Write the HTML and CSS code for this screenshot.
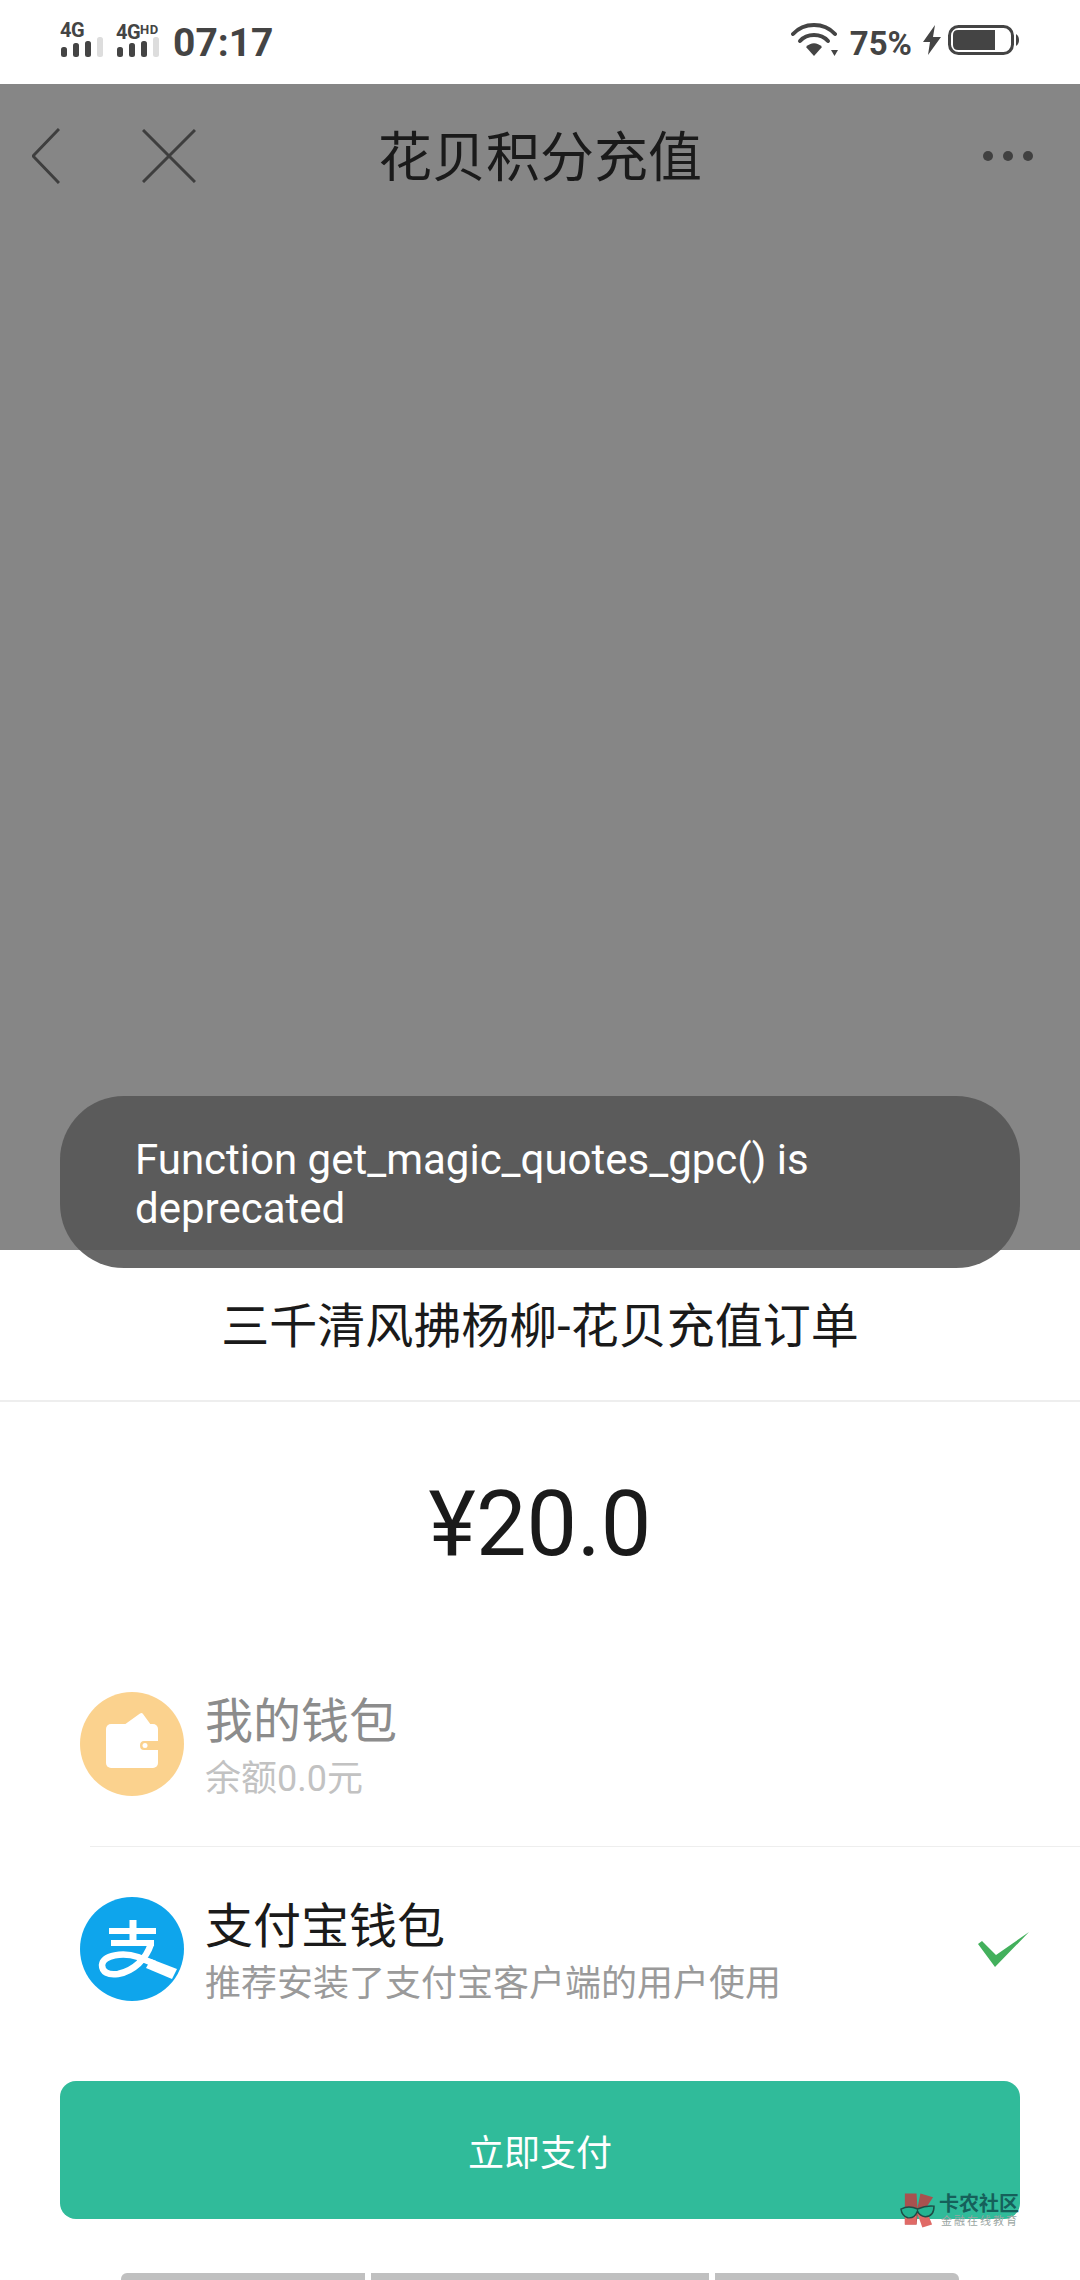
FILE: index.html
```html
<!DOCTYPE html>
<html lang="zh-CN">
<head>
    <meta charset="UTF-8">
    <meta name="viewport" content="width=device-width, initial-scale=1.0">
    <title>花贝积分充值</title>
    <link rel="stylesheet" href="styles.css">
</head>
<body>
    <div class="status-bar">
        <div class="sim">
            <div class="sim-label">4G</div>
            <svg class="sim-bars" width="42" height="20" viewBox="0 0 42 20">
                <rect x="0" y="10" width="6" height="10" rx="2.5" fill="#444"/>
                <rect x="12" y="6" width="6" height="14" rx="2.5" fill="#444"/>
                <rect x="24" y="4" width="6" height="16" rx="2.5" fill="#444"/>
                <rect x="36" y="0" width="6" height="20" rx="2.5" fill="#ddd"/>
            </svg>
        </div>
        <div class="sim">
            <div class="sim-label">4G<span class="sim-hd">HD</span></div>
            <svg class="sim-bars" width="42" height="20" viewBox="0 0 42 20">
                <rect x="0" y="10" width="6" height="10" rx="2.5" fill="#444"/>
                <rect x="12" y="6" width="6" height="14" rx="2.5" fill="#444"/>
                <rect x="24" y="4" width="6" height="16" rx="2.5" fill="#444"/>
                <rect x="36" y="0" width="6" height="20" rx="2.5" fill="#ddd"/>
            </svg>
        </div>
        <span class="clock">07:17</span>
        <div class="status-right">
            <svg class="wifi" width="48" height="34" viewBox="0 0 48 34">
                <path d="M2 11 C13 -1 33 -1 44 11" fill="none" stroke="#444" stroke-width="4" stroke-linecap="round"/>
                <path d="M9 18 C16 10 30 10 37 18" fill="none" stroke="#444" stroke-width="4" stroke-linecap="round"/>
                <path d="M15 24 C20 19 26 19 31 24 L23 33 Z" fill="#444"/>
                <path d="M40 27 H47 L43.5 33 Z" fill="#444"/>
            </svg>
            <span class="battery-level">75%</span>
            <svg class="bolt" width="18" height="30" viewBox="0 0 18 30">
                <path d="M12 0 L0 17 H7 L5 30 L18 12 H10 Z" fill="#444"/>
            </svg>
            <svg width="72" height="30" viewBox="0 0 72 30">
                <rect x="1.5" y="1.5" width="63" height="27" rx="9" fill="none" stroke="#444" stroke-width="3"/>
                <path d="M10 5 H47 V25 H10 Q5 25 5 20 V10 Q5 5 10 5 Z" fill="#444"/>
                <path d="M68 9 Q71 11 71 15 Q71 19 68 21 Z" fill="#444"/>
            </svg>
        </div>
    </div>

    <div class="webview">
        <div class="nav">
            <svg class="nav-back" width="28" height="56" viewBox="0 0 28 56">
                <path d="M27 1 L1 28 L27 55" fill="none" stroke="#3e3e3e" stroke-width="3"/>
            </svg>
            <svg class="nav-close" width="54" height="54" viewBox="0 0 54 54">
                <path d="M1 1 L53 53 M53 1 L1 53" fill="none" stroke="#3e3e3e" stroke-width="3"/>
            </svg>
            <h1 class="nav-title">花贝积分充值</h1>
            <div class="nav-more"><i></i><i></i><i></i></div>
        </div>
    </div>

    <div class="sheet">
        <div class="order-name">三千清风拂杨柳-花贝充值订单</div>
        <div class="amount">¥20.0</div>

        <div class="pay-row">
            <svg class="pay-icon" width="104" height="104" viewBox="0 0 104 104">
                <circle cx="52" cy="52" r="52" fill="#fbd28e"/>
                <path d="M44 33 L60 21.500 Q62 20.500 63 22 L71 33 Z" fill="#fff"/>
                <rect x="26" y="32" width="52" height="44" rx="5" fill="#fff"/>
                <path d="M78 49 H64 Q60 49 60 53.500 Q60 58 64 58 H78 Z" fill="#fbd28e"/>
                <circle cx="65" cy="53.500" r="2.500" fill="#fff"/>
            </svg>
            <div class="pay-text">
                <div class="pay-name is-disabled">我的钱包</div>
                <div class="pay-desc is-disabled">余额0.0元</div>
            </div>
        </div>
        <div class="pay-divider"></div>
        <div class="pay-row">
            <svg class="pay-icon" width="104" height="104" viewBox="0 0 104 104">
                <circle cx="52" cy="52" r="52" fill="#0ea5ec"/>
                <path d="M29 34 H76 M31 46 H74" fill="none" stroke="#fff" stroke-width="6"/>
                <path d="M53 23 V46" fill="none" stroke="#fff" stroke-width="7"/>
                <path d="M71 47 C66 62 54 74 38 77 C28 78.500 22 75 22 68 C23 58 43 55 58 60 L75 67" fill="none" stroke="#fff" stroke-width="6.500"/>
                <path d="M71 62 L97 72 L92 82 L66 71 Z" fill="#fff"/>
            </svg>
            <div class="pay-text">
                <div class="pay-name">支付宝钱包</div>
                <div class="pay-desc">推荐安装了支付宝客户端的用户使用</div>
            </div>
            <svg class="pay-check" width="51" height="35" viewBox="0 0 51 35">
                <path d="M0 12 L4 9 L18 23 L51 0 L17 35 Z" fill="#43b05c"/>
            </svg>
        </div>

        <button class="pay-btn">立即支付</button>

        <div class="home-bars"><i class="bar-a"></i><i class="bar-b"></i><i class="bar-c"></i></div>
    </div>

    <div class="toast">Function get_magic_quotes_gpc() is deprecated</div>

    <div class="watermark">
        <svg width="35" height="36" viewBox="0 0 36 36">
            <path d="M5 1 H17 L18 16 L21 1 L34 5 L26 17 L18 24 L17 33 H5 Z" fill="#a8514f"/>
            <path d="M18 22 L23 36 L33 33 L27 18 Z" fill="#e06a66"/>
            <path d="M5 24 H17 V33 H5 Z" fill="#e06a66"/>
            <path d="M1 17 Q9 13 18 17 Q27 13 35 14 Q35 25 26 25 Q20 24 18 19 Q15 27 8 26 Q2 24 1 17 Z" fill="#24b491" stroke="#1e4d46" stroke-width="1.500"/>
        </svg>
        <div class="watermark-text">
            <div class="watermark-name">卡农社区</div>
            <div class="watermark-sub">金融在线教育</div>
        </div>
    </div>
</body>
</html>
```

FILE: styles.css
```css
* {
    box-sizing: border-box;
}
html, body {
    margin: 0;
    padding: 0;
}
body {
    position: relative;
    width: 1080px;
    height: 2280px;
    overflow: hidden;
    background: #fff;
    font-family: Roboto, "Noto Sans CJK SC", sans-serif;
}

/* status bar */
.status-bar {
    height: 84px;
    padding: 23px 60px 0;
    display: flex;
    align-items: flex-start;
    background: #fff;
    color: #444;
}
.sim {
    width: 42px;
    margin-right: 13px;
    margin-left: 1px;
}
.sim-label {
    height: 14px;
    margin-left: -1px;
    font-size: 20px;
    line-height: 14px;
    font-weight: 700;
    letter-spacing: -0.5px;
    white-space: nowrap;
}
.sim-hd {
    font-size: 13px;
    letter-spacing: 0.5px;
    vertical-align: 5px;
}
.sim-bars {
    display: block;
}
.clock {
    margin-left: 1px;
    font-size: 39px;
    line-height: 40px;
    font-weight: 700;
}
.status-right {
    margin-left: auto;
    display: flex;
    align-items: center;
    height: 34px;
}
.wifi {
    margin-right: -1px;
}
.battery-level {
    margin-left: 12px;
    font-size: 33px;
    font-weight: 700;
    line-height: 40px;
    margin-top: 7px;
}
.bolt {
    margin-left: 11px;
    margin-right: 7px;
}

/* web view behind the dim */
.webview {
    height: 1166px;
    background: #868686;
}
.nav {
    position: relative;
    height: 144px;
    display: flex;
    align-items: center;
    padding-left: 32px;
}
.nav-close {
    margin-left: 82px;
}
.nav-title {
    position: absolute;
    top: 3px;
    left: 0;
    right: 0;
    margin: 0;
    text-align: center;
    font-size: 54px;
    line-height: 144px;
    font-weight: 400;
    color: #1a1a1a;
}
.nav-more {
    position: absolute;
    right: 47px;
    display: flex;
    gap: 10px;
}
.nav-more i {
    width: 10px;
    height: 10px;
    border-radius: 50%;
    background: #404040;
}

/* payment sheet */
.sheet {
    background: #fff;
}
.order-name {
    height: 152px;
    border-bottom: 2px solid #eee;
    text-align: center;
    font-size: 48px;
    line-height: 154px;
    color: #1a1a1a;
}
.amount {
    height: 240px;
    text-align: center;
    font-size: 90px;
    line-height: 246px;
    color: #1a1a1a;
}
.pay-row {
    height: 204px;
    padding-left: 80px;
    display: flex;
    align-items: center;
}
.pay-icon {
    flex: none;
}
.pay-text {
    margin-left: 21px;
    margin-top: 6px;
}
.pay-name {
    font-size: 48px;
    line-height: 58px;
    color: #1a1a1a;
}
.pay-name.is-disabled {
    color: #8c8c8c;
}
.pay-desc {
    margin-top: 6px;
    font-size: 36px;
    line-height: 44px;
    color: #9a9a9a;
}
.pay-desc.is-disabled {
    color: #c2c2c2;
}
.pay-check {
    margin-left: auto;
    margin-right: 51px;
}
.pay-divider {
    height: 1px;
    margin-left: 90px;
    background: #eee;
}
.pay-btn {
    display: block;
    width: 960px;
    height: 138px;
    margin: 30px 60px 0;
    border: none;
    border-radius: 16px;
    background: #30bb9a;
    color: #fff;
    font-family: inherit;
    font-size: 36px;
}
.home-bars {
    margin: 54px 0 0 121px;
    display: flex;
    gap: 6px;
}
.home-bars i {
    height: 12px;
    background: #c0c0c0;
}
.bar-a {
    width: 244px;
    border-radius: 6px 0 0 0;
}
.bar-b {
    width: 338px;
}
.bar-c {
    width: 244px;
    border-radius: 0 6px 0 0;
}

/* overlays */
.toast {
    position: absolute;
    left: 60px;
    top: 1096px;
    width: 960px;
    height: 172px;
    padding: 39px 75px 0;
    border-radius: 64px;
    background: rgba(87, 87, 87, 0.9);
    color: #fff;
    font-size: 42px;
    line-height: 49px;
}
.watermark {
    position: absolute;
    left: 900px;
    top: 2192px;
    display: flex;
    align-items: flex-start;
}
.watermark-text {
    margin-left: 4px;
}
.watermark-name {
    font-size: 20px;
    line-height: 24px;
    font-weight: 700;
    color: #16605a;
}
.watermark-sub {
    margin-left: 2px;
    font-size: 11px;
    line-height: 12px;
    letter-spacing: 2px;
    color: #9aa5a2;
    white-space: nowrap;
}
```
